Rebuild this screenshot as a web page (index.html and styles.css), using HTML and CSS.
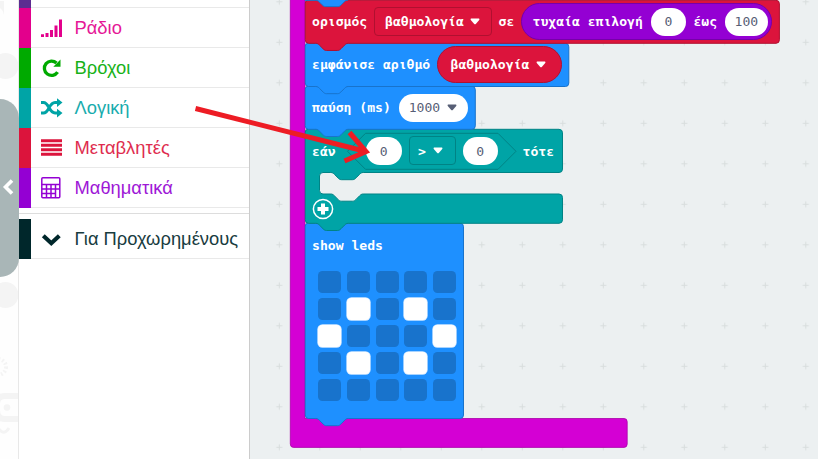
FILE: index.html
```html
<!DOCTYPE html>
<html lang="el">
<head>
<meta charset="utf-8">
<title>MakeCode</title>
<link rel="stylesheet" href="styles.css">
</head>
<body>
<svg class="defs" width="0" height="0" aria-hidden="true">
  <symbol id="caret" viewBox="0 0 10 7"><path d="M1.6.5h6.8c1 0 1.3.7.8 1.4L6 5.700c-.6.7-1.400.7-2 0L.8 1.900C.3 1.200.6.5 1.600.5z" fill="currentColor"/></symbol>
</svg>
<div class="editor">
  <aside class="simulator">
    <svg class="pattern" width="18" height="459" viewBox="0 0 18 459">
      <g fill="#f4f4f4">
        <path d="M0 1h4v14Q3 10 0 8z"/>
        <circle cx="5.500" cy="66" r="13"/>
        <circle cx="5.500" cy="295" r="13"/>
        <circle cx="7" cy="407.500" r="3.300"/>
      </g>
      <g fill="none" stroke="#f4f4f4">
        <path stroke-width="6" d="M19 396H5Q-3 396-3 404v6Q-3 419 5 419h14"/>
        <path stroke-width="3" d="M-1 429q5 7 10-1"/>
        <circle cx="-2" cy="367" r="8" stroke-width="4" stroke-dasharray="1.800 2"/>
      </g>
    </svg>
    <button class="collapse" aria-label="Collapse">
      <svg width="12" height="16" viewBox="0 0 12 16"><path d="M10 1.500L3.500 8l6.500 6.500" fill="none" stroke="#fff" stroke-width="3.600"/></svg>
    </button>
  </aside>
  <nav class="toolbox">
    <div class="row stub c-music"></div>
    <div class="row c-radio">
      <svg class="icon" viewBox="0 0 22 20"><path fill="currentColor" d="M0 16.300h3V19H0zM4.500 15h3v4h-3zM9 12h3v7H9zM13.500 7.500h3V19h-3zM18 1.500h3V19h-3z"/></svg><span>Ράδιο</span></div>
    <div class="row c-loops">
      <svg class="icon" viewBox="0 0 22 20"><path d="M16.600 14.200A7.200 7.200 0 1 1 15.500 5" fill="none" stroke="currentColor" stroke-width="3.300"/><path fill="currentColor" d="M19.500 1.500v7.200h-7.200z"/></svg><span>Βρόχοι</span></div>
    <div class="row c-logic">
      <svg class="icon" viewBox="0 0 22 20"><path d="M0 4.500h2.500C8 4.500 8 15 14 15h3M0 15h2.500C8 15 8 4.500 14 4.500h3" fill="none" stroke="currentColor" stroke-width="3"/><path fill="currentColor" d="M16 .3l5.500 4.200L16 8.900zM16 10.800l5.500 4.200-5.500 4.400z"/></svg><span>Λογική</span></div>
    <div class="row c-vars">
      <svg class="icon" viewBox="0 0 22 20"><path fill="currentColor" d="M0 1.200h21v3H0zM0 5.700h21v3H0zM0 10.200h21v3H0zM0 14.700h21v3H0z"/></svg><span>Μεταβλητές</span></div>
    <div class="row c-math">
      <svg class="icon tall" viewBox="0 0 22 22"><g fill="none" stroke="currentColor" stroke-width="1.500"><rect x=".8" y=".8" width="18" height="20" rx="1"/><path d="M1 7.500h18M1 12h13.500M1 16.500h13.500M5.500 7.500V21M10 7.500V21M14.500 7.500V21M14.500 12H19"/></g></svg><span>Μαθηματικά</span></div>
    <div class="divider"></div>
    <div class="row c-adv">
      <svg class="icon" viewBox="0 0 22 20"><path d="M2.300 6.800l8 7.400 8-7.400" fill="none" stroke="currentColor" stroke-width="4.200"/></svg><span>Για Προχωρημένους</span></div>
  </nav>
  <main class="workspace">
    <svg class="shapes" width="568" height="459" viewBox="250 0 568 459">
      <defs>
        <pattern id="grid" x="238.800" y="1.800" width="40.500" height="40.500" patternUnits="userSpaceOnUse" patternTransform="translate(-20.250 -20.250)">
          <path d="M17.250 20.250h6M20.250 17.250v6" stroke="#d8dddd" stroke-width="1"/>
        </pattern>
      </defs>
      <rect x="250" width="568" height="459" fill="url(#grid)"/>
      <path d="M290.300-5H305V418.500H624q3.200 0 3.200 3.200V444q0 3.400-3.200 3.400H293.500q-3.200 0-3.200-3.400z" fill="#d400d4" stroke="#aa00aa" stroke-width=".8"/>
      <g stroke-width="1">
        <path d="M305.300 226q0-2.800 2.800-2.800H460q3.500 0 3.500 3.500V415q0 3.500-3.500 3.500H348.200c-1.800 0-2.700.9-3.600 1.800l-3.600 3.600c-.9.900-1.800 1.800-3.600 1.800h-10.800c-1.800 0-2.700-.9-3.600-1.800l-3.600-3.600c-.9-.9-1.800-1.800-3.600-1.800H308.500q-3.200 0-3.200-3.500z" fill="#1e90ff" stroke="#1873cc"/>
        <path d="M305.300 132q0-2.700 2.800-2.700H559q3.500 0 3.500 3.500V169q0 3.500-3.500 3.500H363.200c-1.800 0-2.700.9-3.600 1.800l-3.600 3.600c-.9.900-1.800 1.800-3.600 1.800h-10.800c-1.800 0-2.700-.9-3.600-1.800l-3.600-3.600c-.9-.9-1.800-1.800-3.600-1.800H323q-3.500 0-3.500 3.500v14.500q0 3.500 3.500 3.500h7.800c1.800 0 2.700.9 3.600 1.800l3.600 3.600c.9.900 1.800 1.800 3.600 1.800h10.800c1.800 0 2.700-.9 3.600-1.800l3.600-3.600c.9-.9 1.800-1.800 3.600-1.800H559q3.500 0 3.500 3.500V219.800q0 3.500-3.500 3.500H348.200c-1.800 0-2.700.9-3.600 1.800l-3.600 3.600c-.9.900-1.800 1.800-3.600 1.800h-10.800c-1.800 0-2.700-.9-3.600-1.800l-3.600-3.600c-.9-.9-1.800-1.800-3.600-1.800H308.500q-3.200 0-3.200-3.500z" fill="#00a4a6" stroke="#008385"/>
        <path d="M305.300 89q0-2.700 2.800-2.700H472q3.300 0 3.300 3.500V125.800q0 3.500-3.300 3.500H348.200c-1.800 0-2.700.9-3.600 1.800l-3.600 3.600c-.9.900-1.800 1.800-3.600 1.800h-10.800c-1.800 0-2.700-.9-3.600-1.800l-3.600-3.600c-.9-.9-1.800-1.800-3.600-1.800H308.500q-3.200 0-3.200-3.500z" fill="#1e90ff" stroke="#1873cc"/>
        <path d="M305.300 46q0-2.700 2.800-2.700H565.500q3.300 0 3.300 3.500V83q0 3.500-3.300 3.500H348.200c-1.800 0-2.700.9-3.600 1.800l-3.600 3.600c-.9.900-1.800 1.800-3.600 1.800h-10.800c-1.800 0-2.700-.9-3.600-1.800l-3.600-3.600c-.9-.9-1.800-1.800-3.600-1.800H308.500q-3.200 0-3.200-3.500z" fill="#1e90ff" stroke="#1873cc"/>
        <path d="M305.300 3q0-2.700 2.800-2.700H776q3.400 0 3.400 3.500V39.800q0 3.500-3.400 3.500H348.200c-1.800 0-2.700.9-3.600 1.800l-3.600 3.600c-.9.900-1.800 1.800-3.600 1.800h-10.800c-1.800 0-2.700-.9-3.600-1.800l-3.600-3.600c-.9-.9-1.800-1.800-3.600-1.800H308.500q-3.200 0-3.200-3.500z" fill="#dc143c" stroke="#b01030"/>
        <path d="M305-8V.3h10.800c1.800 0 2.700.9 3.600 1.800l2.700 2.700c.9.900 1.800 1.800 3.600 1.800h12c1.800 0 2.700-.9 3.600-1.800l2.700-2.700c.9-.9 1.800-1.800 3.600-1.800V-8z" fill="#1e90ff" stroke="#1873cc"/>
      </g>
      <path d="M365.500 133.300H498L516 151.300 498 169.300H365.500L347.500 151.300z" fill="none" stroke="#008385"/>
    </svg>
    <div class="stack">
      <div class="line">
        <span class="label w-set">ορισμός</span>
        <span class="drop red-drop"><span>βαθμολογία</span><svg class="caret"><use href="#caret"/></svg></span>
        <span class="label w-to">σε</span>
        <span class="pill random"><span class="label">τυχαία επιλογή</span><span class="num n0">0</span><span class="label w-ews">έως</span><span class="num n100">100</span></span>
      </div>
      <div class="line">
        <span class="label w-show">εμφάνισε αριθμό</span>
        <span class="pill variable"><span>βαθμολογία</span><svg class="caret"><use href="#caret"/></svg></span>
      </div>
      <div class="line">
        <span class="label w-pause">παύση (ms)</span>
        <span class="num n1000"><span>1000</span><svg class="caret"><use href="#caret"/></svg></span>
      </div>
      <div class="line if">
        <span class="label w-if">εάν</span>
        <span class="num">0</span>
        <span class="drop op"><span>&gt;</span><svg class="caret"><use href="#caret"/></svg></span>
        <span class="num">0</span>
        <span class="label w-then">τότε</span>
      </div>
      <div class="else">
        <svg width="22" height="22" viewBox="0 0 22 22"><circle cx="11" cy="11" r="9.600" fill="none" stroke="#fff" stroke-width="1.500"/><path d="M11 5.500v11M5.500 11h11" stroke="#fff" stroke-width="4"/></svg>
      </div>
      <div class="line leds-title"><span class="label">show leds</span></div>
      <div class="leds">
        <i></i><i></i><i></i><i></i><i></i>
        <i></i><i class="on"></i><i></i><i class="on"></i><i></i>
        <i class="on"></i><i></i><i></i><i></i><i class="on"></i>
        <i></i><i class="on"></i><i></i><i class="on"></i><i></i>
        <i></i><i></i><i></i><i></i><i></i>
      </div>
    </div>
  </main>
  <svg class="arrow" width="818" height="459" viewBox="0 0 818 459"><path d="M195.500 108.500L366 151.500M349.500 132.500L366 151.500 344.500 161" fill="none" stroke="#ed1c24" stroke-width="5"/></svg>
</div>
</body>
</html>
```
FILE: styles.css
```css
* { box-sizing: border-box; }
body { margin: 0; overflow: hidden; background: #fff; }
.defs { position: absolute; }
.editor { position: relative; display: flex; width: 818px; height: 459px; overflow: hidden; }

.simulator { position: relative; width: 19px; flex: none; border-right: 1px solid #e8e8e8; background: #fefefe; }
.pattern { display: block; }
.collapse {
  position: absolute; left: -19px; top: 99px; width: 38px; height: 178px;
  padding: 0 5px 0 0; border: 0; border-radius: 19px; background: #a9b6b7;
  display: flex; align-items: center; justify-content: flex-end;
}
.collapse svg { margin-bottom: 2px; }

.toolbox { width: 231px; flex: none; border-right: 1px solid #ccc; background: #fff; font: 18.350px/40px "Liberation Sans", Arial, sans-serif; }
.row { position: relative; display: flex; align-items: center; height: 40px; padding-left: 10px; border-left: 12px solid currentColor; white-space: nowrap; }
.row::after { content: ""; position: absolute; left: 0; right: 0; bottom: 0; height: 1px; background: #e9e9e9; }
.row span { opacity: .9; }
.icon { width: 22px; height: 20px; margin-right: 11.500px; flex: none; display: block; }
.icon.tall { height: 22px; }
.stub { height: 8px; }
.divider { height: 11px; padding-top: 5px; }
.divider::before { content: ""; display: block; height: 1px; background: #ddd; }
.c-music { color: #5c2d91; }
.c-radio { color: #e3008c; }
.c-loops { color: #00aa00; }
.c-logic { color: #00a4a6; }
.c-vars { color: #dc143c; }
.c-math { color: #9400d3; }
.c-adv { color: #00272b; }

.workspace { position: relative; flex: 1; background: #ecf0f1; color: #fff; font: bold 13.100px/18px "DejaVu Sans Mono", monospace; }
.shapes { position: absolute; inset: 0; }
.stack { position: relative; margin-left: 55px; white-space: nowrap; }
.line { display: flex; align-items: center; height: 43.100px; padding-left: 7px; }
.if .label, .if .num, .op span { padding-top: 2px; }
.label { flex: none; }
.caret { width: 10px; height: 7px; flex: none; }
.drop, .num, .pill { display: flex; align-items: center; flex: none; }
.drop { height: 29px; padding-left: 10px; gap: 6px; border: 1px solid #b01030; border-radius: 4px; }
.num { width: 35.500px; height: 28px; justify-content: center; border-radius: 14px; background: #fff; color: #575e75; font-weight: normal; }
.pill { height: 37px; border-radius: 19px; }
.w-set { width: 62px; }
.red-drop { width: 118px; }
.w-to { width: 29px; padding-left: 6.500px; }
.random { width: 251px; padding-left: 10.500px; background: #9400d3; border: 1px solid #7600a9; }
.n0 { width: 35px; margin-left: 8px; }
.w-ews { width: 39px; padding-left: 7.500px; }
.n100 { width: 43px; }
.w-show { width: 125px; }
.variable { width: 125px; padding-left: 12.500px; gap: 7px; background: #dc143c; border: 1px solid #b01030; }
.w-pause { width: 86.500px; }
.n1000 { width: 69px; gap: 7px; }
.w-if { width: 54px; }
.op { width: 47px; margin: 0 7px; padding-left: 8.500px; gap: 7px; border-color: #008385; }
.if .w-then { padding-left: 24.500px; }
.else { height: 50.600px; padding: 26px 0 0 7px; }
.else svg { display: block; }
.leds-title { height: 44px; padding-top: 2px; }
.leds { display: grid; grid-template-columns: repeat(5, 23px); grid-auto-rows: 22.500px; column-gap: 5.800px; row-gap: 4.500px; padding: 4px 0 0 13px; }
.leds i { border-radius: 4.500px; background: #1873cc; }
.leds .on { background: #fff; box-shadow: 0 0 0 .7px #d5e9ff; }
.arrow { position: absolute; left: 0; top: 0; pointer-events: none; }
```
